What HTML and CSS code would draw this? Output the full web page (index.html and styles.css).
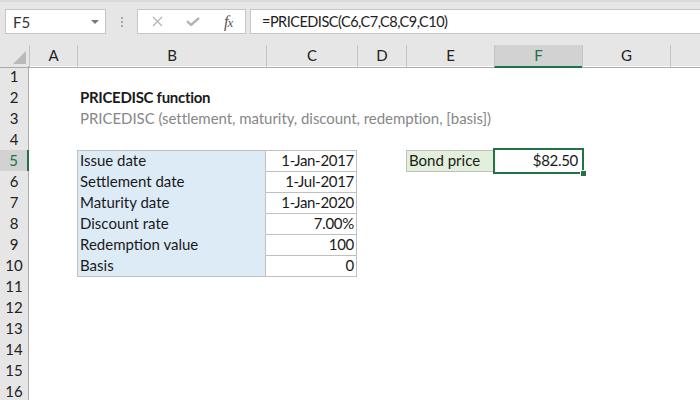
FILE: index.html
```html
<!DOCTYPE html>
<html>
<head>
<meta charset="utf-8">
<link rel="stylesheet" href="styles.css">
</head>
<body>
<div class="app">
  <div class="toolbar">
    <div class="namebox"><span class="nb-text">F5</span><span class="caret"></span></div>
    <div class="grip"><i></i><i></i><i></i></div>
    <div class="fxbox">
      <svg class="ic-x" width="11" height="11" viewBox="0 0 11 11"><path d="M1 1 L10 10 M10 1 L1 10" stroke="#b4b4b4" stroke-width="1.3" fill="none"/></svg>
      <svg class="ic-ok" width="14" height="9" viewBox="0 0 14 9"><path d="M1 4 L5 8 L13 1" stroke="#b4b4b4" stroke-width="2.4" fill="none"/></svg>
      <span class="fx">f<span class="fx-x">x</span></span>
    </div>
    <div class="formula">=PRICEDISC(C6,C7,C8,C9,C10)</div>
  </div>
  <div class="sheet">
    <div class="row head">
      <div class="corner"><span class="tri"></span></div>
      <div class="ch">A</div>
      <div class="ch">B</div>
      <div class="ch">C</div>
      <div class="ch">D</div>
      <div class="ch">E</div>
      <div class="ch ch-sel">F</div>
      <div class="ch">G</div>
      <div class="ch"></div>
    </div>
    <div class="row"><div class="rh">1</div></div>
    <div class="row"><div class="rh">2</div><div class="c cb title">PRICEDISC function</div></div>
    <div class="row"><div class="rh">3</div><div class="c cb sub">PRICEDISC (settlement, maturity, discount, redemption, [basis])</div></div>
    <div class="row"><div class="rh">4</div></div>
    <div class="row"><div class="rh rh-sel">5</div><div class="c cb t lbl top">Issue date</div><div class="c cc t num top">1-Jan-2017</div><div class="c ce t green">Bond price</div><div class="c cf num sel">$82.50</div></div>
    <div class="row"><div class="rh">6</div><div class="c cb t lbl">Settlement date</div><div class="c cc t num">1-Jul-2017</div></div>
    <div class="row"><div class="rh">7</div><div class="c cb t lbl">Maturity date</div><div class="c cc t num">1-Jan-2020</div></div>
    <div class="row"><div class="rh">8</div><div class="c cb t lbl">Discount rate</div><div class="c cc t num">7.00%</div></div>
    <div class="row"><div class="rh">9</div><div class="c cb t lbl">Redemption value</div><div class="c cc t num">100</div></div>
    <div class="row"><div class="rh">10</div><div class="c cb t lbl">Basis</div><div class="c cc t num">0</div></div>
    <div class="row"><div class="rh">11</div></div>
    <div class="row"><div class="rh">12</div></div>
    <div class="row"><div class="rh">13</div></div>
    <div class="row"><div class="rh">14</div></div>
    <div class="row"><div class="rh">15</div></div>
    <div class="row"><div class="rh">16</div></div>
  </div>
</div>
</body>
</html>
```
FILE: styles.css
```css
html, body {
  margin: 0;
  padding: 0;
  background: #ffffff;
}
body {
  font-family: "Lato", "Liberation Sans", sans-serif;
  font-size: 15px;
  color: #1a1a1a;
}
.app {
  width: 700px;
  height: 400px;
  overflow: hidden;
}
.toolbar {
  height: 45px;
  box-sizing: border-box;
  background: #e6e6e6;
  border-top: 2px solid #dadada;
  padding: 7px 0 0 5px;
  display: flex;
  align-items: flex-start;
}
.namebox {
  width: 101px;
  height: 25px;
  box-sizing: border-box;
  border: 1px solid #c6c6c6;
  background: #fff;
  display: flex;
  align-items: center;
  justify-content: space-between;
  padding: 0 6px 0 7px;
}
.nb-text {
  color: #333;
  font-size: 15px;
}
.caret {
  width: 0;
  height: 0;
  border-left: 4px solid transparent;
  border-right: 4px solid transparent;
  border-top: 4px solid #7a7a7a;
}
.grip {
  margin-left: 15px;
  padding-top: 8px;
  display: flex;
  flex-direction: column;
  gap: 2px;
}
.grip i {
  display: block;
  width: 2px;
  height: 2px;
  background: #a8a8a8;
}
.fxbox {
  margin-left: 14px;
  width: 109px;
  height: 25px;
  box-sizing: border-box;
  border: 1px solid #c6c6c6;
  background: #fff;
  display: flex;
  align-items: center;
  padding-left: 14px;
}
.ic-ok {
  margin-left: 23px;
}
.fx {
  margin-left: 24px;
  font-family: "Liberation Serif", serif;
  font-style: italic;
  font-size: 16px;
  color: #555;
  letter-spacing: -1px;
}
.fx-x {
  font-size: 13px;
}
.formula {
  margin-left: 4px;
  flex: 1;
  height: 25px;
  box-sizing: border-box;
  border: 1px solid #c6c6c6;
  border-right: none;
  background: #fff;
  padding-left: 11px;
  line-height: 23px;
  color: #222;
  font-size: 14.5px;
  letter-spacing: -0.5px;
}
.row {
  display: grid;
  grid-template-columns: 29px 48px 189px 91px 49px 88px 88px 88px 1fr;
  height: 21px;
  line-height: 21px;
}
.head {
  background: #e6e6e6;
}
.corner {
  position: relative;
  border-bottom: 1px solid #ababab;
}
.tri {
  position: absolute;
  right: 3px;
  bottom: 3px;
  width: 13px;
  height: 13px;
  background: #b9b9b9;
  clip-path: polygon(100% 0, 100% 100%, 0 100%);
}
.ch {
  border-left: 1px solid #c4c4c4;
  border-bottom: 1px solid #ababab;
  text-align: center;
  color: #222;
  box-sizing: border-box;
}
.ch-sel {
  background: #d2d2d2;
  border-bottom: 2px solid #217346;
  color: #217346;
}
.rh {
  grid-column: 1;
  background: #e6e6e6;
  border-right: 1px solid #ababab;
  border-bottom: 1px solid #c4c4c4;
  box-sizing: border-box;
  text-align: center;
  color: #222;
}
.rh-sel {
  background: #d2d2d2;
  border-right: 2px solid #217346;
  color: #217346;
}
.c {
  box-sizing: border-box;
  white-space: nowrap;
  padding: 0 3px;
}
.cb { grid-column: 3; }
.cc { grid-column: 4; }
.ce { grid-column: 6; }
.cf { grid-column: 7; }
.title {
  font-weight: bold;
  overflow: visible;
  letter-spacing: -0.3px;
}
.sub {
  color: #878787;
  overflow: visible;
  letter-spacing: -0.05px;
}
.t {
  border-right: 1px solid #c0c0c0;
  border-bottom: 1px solid #c0c0c0;
}
.top {
  border-top: 1px solid #c0c0c0;
  line-height: 19px;
}
.lbl {
  background: #ddebf7;
  border-left: 1px solid #c0c0c0;
  padding-left: 2px;
}
.num {
  text-align: right;
  padding-right: 2px;
  letter-spacing: -0.3px;
}
.green {
  background: #e2efda;
  border: 1px solid #c0c0c0;
  padding-left: 2px;
  line-height: 19px;
}
.sel {
  position: relative;
  padding-right: 4px;
}
.sel::before {
  content: "";
  position: absolute;
  left: -1px;
  top: -2px;
  right: -2px;
  bottom: -2px;
  border: 2px solid #217346;
}
.sel::after {
  content: "";
  position: absolute;
  right: -4px;
  bottom: -4px;
  width: 5px;
  height: 5px;
  background: #217346;
  border-left: 1px solid #fff;
  border-top: 1px solid #fff;
}
```
